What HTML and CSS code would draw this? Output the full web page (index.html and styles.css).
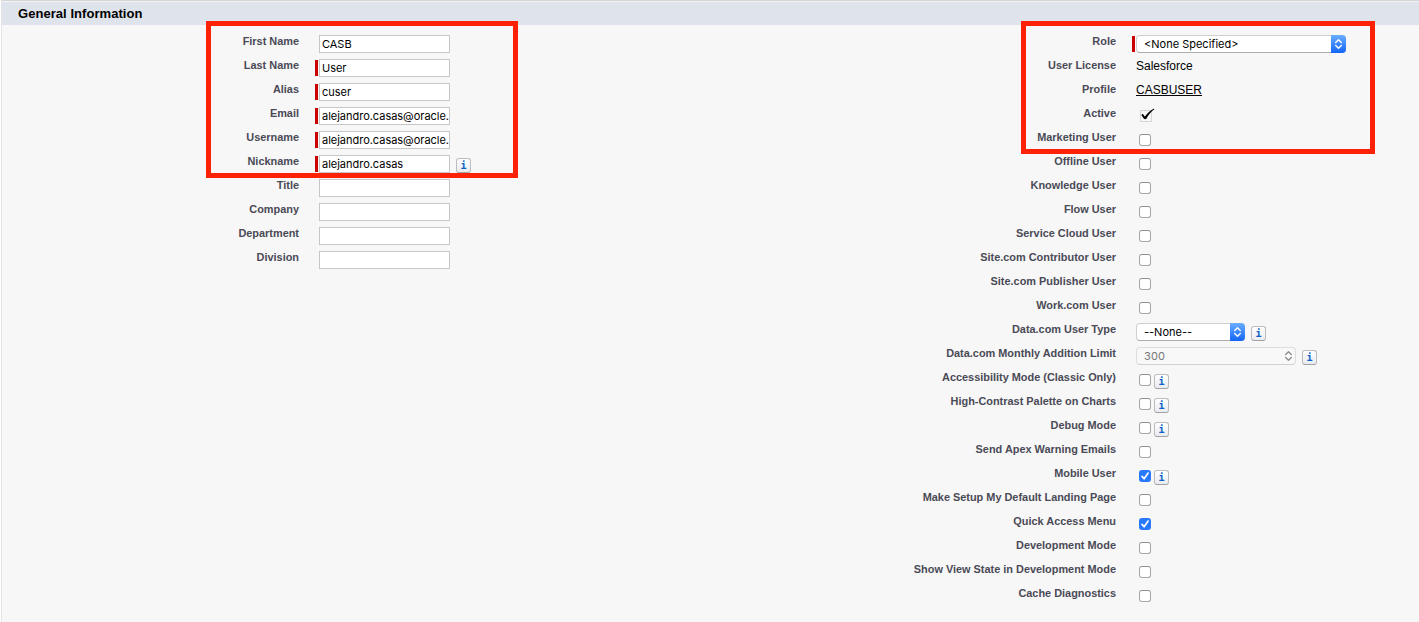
FILE: index.html
```html
<!DOCTYPE html>
<html lang="en">
<head>
<meta charset="utf-8">
<title>General Information</title>
<link rel="stylesheet" href="styles.css">
</head>
<body>
<svg class="defs" width="0" height="0" aria-hidden="true">
  <symbol id="tick" viewBox="0 0 12 12"><path d="M3 6.4 5.1 8.8 9.1 3" fill="none" stroke="#fff" stroke-width="1.6" stroke-linecap="round" stroke-linejoin="round"/></symbol>
  <symbol id="arrows" viewBox="0 0 15 18"><path d="M4.7 7.4 7.5 4.7 10.3 7.4M4.7 10.6 7.5 13.3 10.3 10.6" fill="none" stroke="currentColor" stroke-width="1.4" stroke-linecap="round" stroke-linejoin="round"/></symbol>
</svg>
<main class="section">
  <h3 class="heading">General Information</h3>
  <div class="columns">
    <div class="column left">
      <div class="row"><label>First Name</label><div class="value"><span class="field"><span class="text">CASB</span></span></div></div>
      <div class="row"><label>Last Name</label><div class="value required"><span class="field"><span class="text">User</span></span></div></div>
      <div class="row"><label>Alias</label><div class="value required"><span class="field"><span class="text">cuser</span></span></div></div>
      <div class="row"><label>Email</label><div class="value required"><span class="field"><span class="text">alejandro.casas@oracle.</span></span></div></div>
      <div class="row"><label>Username</label><div class="value required"><span class="field"><span class="text">alejandro.casas@oracle.</span></span></div></div>
      <div class="row"><label>Nickname</label><div class="value required"><span class="field"><span class="text">alejandro.casas</span></span><span class="info">i</span></div></div>
      <div class="row"><label>Title</label><div class="value"><span class="field"></span></div></div>
      <div class="row"><label>Company</label><div class="value"><span class="field"></span></div></div>
      <div class="row"><label>Department</label><div class="value"><span class="field"></span></div></div>
      <div class="row"><label>Division</label><div class="value"><span class="field"></span></div></div>
    </div>
    <div class="column right">
      <div class="row"><label>Role</label><div class="value required"><span class="select role"><span class="choice">&lt;None Specified&gt;</span><svg class="stepper"><use href="#arrows"/></svg></span></div></div>
      <div class="row"><label>User License</label><div class="value"><span class="plain license">Salesforce</span></div></div>
      <div class="row"><label>Profile</label><div class="value"><a class="plain profile">CASBUSER</a></div></div>
      <div class="row"><label>Active</label><div class="value"><svg class="active-mark" viewBox="0 0 16 15"><rect x="1.5" y="2.500" width="11" height="11" fill="none" stroke="#b4b4b4" stroke-dasharray="1 1"/><path d="M3.500 7 5.500 9.800" fill="none" stroke="#000" stroke-width="2" stroke-linecap="round"/><path d="M5.200 9.500C8 5.500 11 2.500 15 .5L15.300 1.200C12 3.800 9.500 6.800 7.200 11L5.600 11.300Z" fill="#000"/></svg></div></div>
      <div class="row"><label>Marketing User</label><div class="value"><span class="check"></span></div></div>
      <div class="row"><label>Offline User</label><div class="value"><span class="check"></span></div></div>
      <div class="row"><label>Knowledge User</label><div class="value"><span class="check"></span></div></div>
      <div class="row"><label>Flow User</label><div class="value"><span class="check"></span></div></div>
      <div class="row"><label>Service Cloud User</label><div class="value"><span class="check"></span></div></div>
      <div class="row"><label>Site.com Contributor User</label><div class="value"><span class="check"></span></div></div>
      <div class="row"><label>Site.com Publisher User</label><div class="value"><span class="check"></span></div></div>
      <div class="row"><label>Work.com User</label><div class="value"><span class="check"></span></div></div>
      <div class="row"><label>Data.com User Type</label><div class="value"><span class="select type"><span class="choice">--None--</span><svg class="stepper"><use href="#arrows"/></svg></span><span class="info">i</span></div></div>
      <div class="row"><label>Data.com Monthly Addition Limit</label><div class="value"><span class="select limit"><span class="choice">300</span><svg class="stepper"><use href="#arrows"/></svg></span><span class="info">i</span></div></div>
      <div class="row"><label>Accessibility Mode (Classic Only)</label><div class="value"><span class="check"></span><span class="info">i</span></div></div>
      <div class="row"><label>High-Contrast Palette on Charts</label><div class="value"><span class="check"></span><span class="info">i</span></div></div>
      <div class="row"><label>Debug Mode</label><div class="value"><span class="check"></span><span class="info">i</span></div></div>
      <div class="row"><label>Send Apex Warning Emails</label><div class="value"><span class="check"></span></div></div>
      <div class="row"><label>Mobile User</label><div class="value"><span class="check on"><svg><use href="#tick"/></svg></span><span class="info">i</span></div></div>
      <div class="row"><label>Make Setup My Default Landing Page</label><div class="value"><span class="check"></span></div></div>
      <div class="row"><label>Quick Access Menu</label><div class="value"><span class="check on"><svg><use href="#tick"/></svg></span></div></div>
      <div class="row"><label>Development Mode</label><div class="value"><span class="check"></span></div></div>
      <div class="row"><label>Show View State in Development Mode</label><div class="value"><span class="check"></span></div></div>
      <div class="row"><label>Cache Diagnostics</label><div class="value"><span class="check"></span></div></div>
    </div>
  </div>
</main>
<div class="callout names"></div>
<div class="callout access"></div>
</body>
</html>
```
FILE: styles.css
```css
* { box-sizing: border-box; }
body { margin: 0; background: #fff; font-family: "Liberation Sans", Arial, sans-serif; overflow: hidden; }
.defs { position: absolute; }
.section { height: 622px; margin-left: 1px; border-left: 1px solid #e4e4e6; border-top: 1px solid #d4d4d4; background: #f7f7f7; }
.heading { margin: 0; height: 24px; border-top: 1px solid #f3f3f5; background: #dfe3ec; padding-left: 16px; font-size: 13px; letter-spacing: 0.05px; line-height: 23px; color: #000; }
.columns { display: grid; grid-template-columns: 817px 1fr; padding-top: 7px; }
.row { display: grid; height: 24px; }
.left .row { grid-template-columns: 297px 1fr; column-gap: 20px; }
.right .row { grid-template-columns: 297px 1fr; column-gap: 20px; }
label { text-align: right; font-size: 10.92px; font-weight: bold; line-height: 13px; padding-top: 3px; color: #4a4a56; white-space: nowrap; }
.value { display: flex; align-items: flex-start; padding-top: 3px; }
.required::before { content: ""; width: 3px; height: 16px; margin: 1px 1px 0 -4px; background: #c00; }
.field { width: 131px; height: 18px; border: 1px solid #c6c6c6; background: #fff; padding: 0 1px 0 2px; }
.text { display: block; font: 11px/17px Inter, sans-serif; letter-spacing: -0.02px; color: #000; white-space: nowrap; }
.info { width: 15px; height: 15px; margin: 3px 0 0 6px; border: 1px solid #bbbcbd; border-bottom-color: #a2a2a2; border-radius: 3px; background: linear-gradient(#fff, #e8ebf0); color: #0b62c4; font: bold 10px/13px "DejaVu Sans Mono", monospace; text-align: center; }
.select { display: flex; height: 18px; border: 1px solid #cfcfcf; border-bottom-color: #adadad; border-radius: 4px; background: #fff; padding-left: 7px; justify-content: space-between; font: 11px/17px Inter, sans-serif; letter-spacing: 0; color: #000; }
.role { width: 210px; }
.type { width: 109px; }
.limit { width: 160px; letter-spacing: 0.15px; color: #777; background: #f8f8f8; border-color: #dedede; border-bottom-color: #d0d0d0; }
.stepper { width: 15px; height: 18px; margin: -1px -1px 0 0; flex: none; border-radius: 0 4px 4px 0; background: linear-gradient(#6aadff, #1465f7); color: #fff; }
.limit .stepper { background: none; color: #8f8f8f; }
.plain { font-size: 12px; line-height: 14px; color: #000; }
.profile { text-decoration: underline; text-underline-offset: 1px; }
.active-mark { width: 16px; height: 15px; margin: 1px 0 0 3px; }
.check { width: 12px; height: 12px; margin: 3px 0 0 3px; border: 1px solid #a6a6a6; border-top-color: #8f8f8f; border-radius: 3px; background: #fff; }
.check + .info { margin-left: 3px; }
.check.on { border: 0; background: #2878fb; }
.check svg { display: block; width: 12px; height: 12px; }
.callout { position: absolute; top: 21px; border: 5px solid #ff2105; }
.names { left: 206px; width: 312px; height: 157px; }
.access { left: 1021px; width: 354px; height: 133px; }
```
